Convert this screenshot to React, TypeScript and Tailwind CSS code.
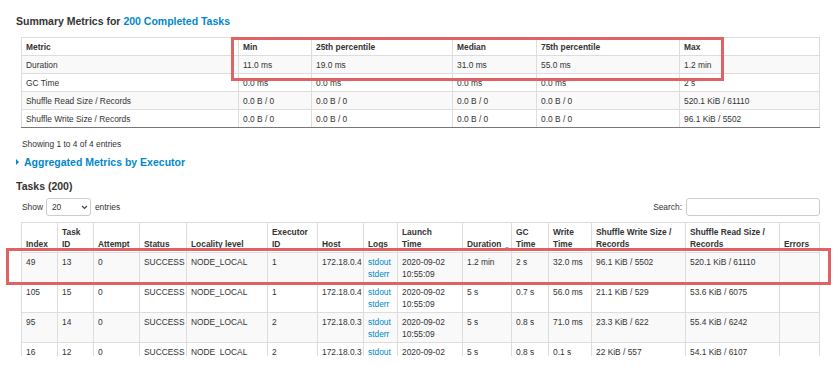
const summaryCols = [217, 73, 141, 84, 143, 140];
const summaryHead = ["Metric", "Min", "25th percentile", "Median", "75th percentile", "Max"];
const summaryRows = [
  ["Duration", "11.0 ms", "19.0 ms", "31.0 ms", "55.0 ms", "1.2 min"],
  ["GC Time", "0.0 ms", "0.0 ms", "0.0 ms", "0.0 ms", "2 s"],
  ["Shuffle Read Size / Records", "0.0 B / 0", "0.0 B / 0", "0.0 B / 0", "0.0 B / 0", "520.1 KiB / 61110"],
  ["Shuffle Write Size / Records", "0.0 B / 0", "0.0 B / 0", "0.0 B / 0", "0.0 B / 0", "96.1 KiB / 5502"],
];

const taskCols = [36, 36, 46, 47, 81, 50, 46, 34, 65, 49, 37, 43, 94, 94, 40];
const taskHead: [string, string?][] = [
  ["Index"],
  ["Task", "ID"],
  ["Attempt"],
  ["Status"],
  ["Locality level"],
  ["Executor", "ID"],
  ["Host"],
  ["Logs"],
  ["Launch", "Time"],
  ["Duration"],
  ["GC", "Time"],
  ["Write", "Time"],
  ["Shuffle Write Size /", "Records"],
  ["Shuffle Read Size /", "Records"],
  ["Errors"],
];

const tasks = [
  ["49", "13", "0", "SUCCESS", "NODE_LOCAL", "1", "172.18.0.4", "1.2 min", "2 s", "32.0 ms", "96.1 KiB / 5502", "520.1 KiB / 61110"],
  ["105", "15", "0", "SUCCESS", "NODE_LOCAL", "1", "172.18.0.4", "5 s", "0.7 s", "56.0 ms", "21.1 KiB / 529", "53.6 KiB / 6075"],
  ["95", "14", "0", "SUCCESS", "NODE_LOCAL", "2", "172.18.0.3", "5 s", "0.8 s", "71.0 ms", "23.3 KiB / 622", "55.4 KiB / 6242"],
  ["16", "12", "0", "SUCCESS", "NODE_LOCAL", "2", "172.18.0.3", "5 s", "0.8 s", "0.1 s", "22 KiB / 557", "54.1 KiB / 6107"],
];

const cell = "border border-[#ddd] px-[4px] pt-[3px] pb-[2px] text-left align-top";

export default function App() {
  return (
    <div className="relative h-[356px] overflow-hidden bg-white pl-4 pr-5 font-['Liberation_Sans',Arial,sans-serif] text-[8.4px] leading-[12px] text-[#333]">
      <h4 className="pt-[14px] text-[10.5px] font-bold leading-[14px]">
        Summary Metrics for <a className="text-[#0088cc]">200 Completed Tasks</a>
      </h4>

      <table className="mt-[9px] ml-[5px] w-[798px] table-fixed border-collapse">
        <colgroup>
          {summaryCols.map((w, i) => (
            <col key={i} style={{ width: w }} />
          ))}
        </colgroup>
        <thead>
          <tr>
            {summaryHead.map((h) => (
              <th key={h} className={cell + " font-bold"}>
                {h}
              </th>
            ))}
          </tr>
        </thead>
        <tbody>
          {summaryRows.map((r, i) => (
            <tr key={i} className={i % 2 === 0 ? "bg-[#f9f9f9]" : "bg-white"}>
              {r.map((c, j) => (
                <td key={j} className={cell + (i === 3 ? " border-b-[#777]" : "")}>
                  {c}
                </td>
              ))}
            </tr>
          ))}
        </tbody>
      </table>

      <div className="mt-[10px] ml-[6px]">Showing 1 to 4 of 4 entries</div>

      <div className="mt-[5px] flex items-center gap-[5px] text-[10.5px] font-bold leading-[14px] text-[#0088cc]">
        <svg width="3" height="6" viewBox="0 0 3 6" className="shrink-0">
          <path d="M0 0 L3 3 L0 6 Z" fill="#0088cc" />
        </svg>
        <span>Aggregated Metrics by Executor</span>
      </div>

      <h4 className="mt-[10px] text-[10.5px] font-bold leading-[14px]">Tasks (200)</h4>

      <div className="mt-[5px] ml-[6px] flex h-[18px] w-[798px] items-center">
        <span>Show</span>
        <div className="ml-[3px] flex h-[18px] w-[45px] items-center justify-between rounded-[3px] border border-[#ccc] pr-[2px] pl-[5px]">
          <span>20</span>
          <svg width="7" height="5" viewBox="0 0 7 5">
            <path d="M1 1 L3.5 3.5 L6 1" fill="none" stroke="#444" strokeWidth="1.2" />
          </svg>
        </div>
        <span className="ml-[4px]">entries</span>
        <span className="ml-auto mr-[4px]">Search:</span>
        <div className="h-[18px] w-[134px] rounded-[3px] border border-[#ccc]" />
      </div>

      <table className="mt-[6px] ml-[5px] w-[798px] table-fixed border-collapse">
        <colgroup>
          {taskCols.map((w, i) => (
            <col key={i} style={{ width: w }} />
          ))}
        </colgroup>
        <thead>
          <tr>
            {taskHead.map(([a, b]) => (
              <th key={a} className="border border-[#ddd] px-[4px] pt-[3px] pb-[2px] text-left align-bottom font-bold whitespace-nowrap">
                {b ? (
                  <>
                    {a}
                    <br />
                    {b}
                  </>
                ) : a === "Duration" ? (
                  <>
                    {a}
                    <span className="ml-[4px] inline-block h-0 w-0 border-x-[2.5px] border-t-[3px] border-x-transparent border-t-[#9aa6e0] align-[-3px]" />
                  </>
                ) : (
                  a
                )}
              </th>
            ))}
          </tr>
        </thead>
        <tbody>
          {tasks.map((t, i) => (
            <tr key={i} className={i % 2 === 0 ? "bg-[#f9f9f9]" : "bg-white"}>
              {t.slice(0, 7).map((c, j) => (
                <td key={j} className={cell + " whitespace-nowrap"}>
                  {c}
                </td>
              ))}
              <td className={cell}>
                <a className="block text-[#0088cc]">stdout</a>
                <a className="block text-[#0088cc]">stderr</a>
              </td>
              <td className={cell}>
                <div>2020-09-02</div>
                <div>10:55:09</div>
              </td>
              {t.slice(7).map((c, j) => (
                <td key={j} className={cell + " whitespace-nowrap"}>
                  {c}
                </td>
              ))}
              <td className={cell} />
            </tr>
          ))}
        </tbody>
      </table>

      {/* annotation boxes */}
      <div className="absolute top-[37px] left-[231px] h-[44px] w-[493px] border-[3px] border-[#e06262]" />
      <div className="absolute top-[248px] left-[6px] h-[37px] w-[825px] border-[3px] border-[#e06262]" />
    </div>
  );
}
